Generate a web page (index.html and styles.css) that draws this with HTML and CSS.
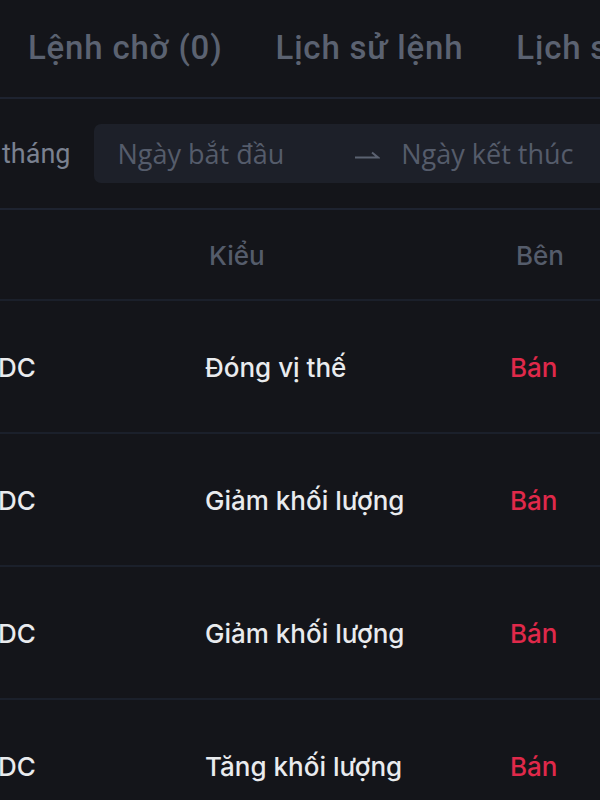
FILE: index.html
```html
<!DOCTYPE html>
<html lang="vi">
<head>
<meta charset="utf-8">
<link rel="stylesheet" href="styles.css">
</head>
<body>
<div class="page">
  <nav class="tabs">
    <span class="tab">Lệnh chờ (0)</span>
    <span class="tab">Lịch sử lệnh</span>
    <span class="tab">Lịch sử giao dịch</span>
  </nav>
  <div class="filters">
    <span class="period">tháng</span>
    <div class="range">
      <span class="ph">Ngày bắt đầu</span>
      <span class="arrow"><svg width="26" height="10" viewBox="0 0 26 10"><path d="M1 8.5H24L18 3.5" fill="none" stroke="#5b6271" stroke-width="2"/></svg></span>
      <span class="ph">Ngày kết thúc</span>
    </div>
  </div>
  <div class="table">
    <div class="row head">
      <span class="c1"></span>
      <span class="c2">Kiểu</span>
      <span class="c3">Bên</span>
    </div>
    <div class="row">
      <span class="c1">USDC</span>
      <span class="c2">Đóng vị thế</span>
      <span class="c3 sell">Bán</span>
    </div>
    <div class="row">
      <span class="c1">USDC</span>
      <span class="c2">Giảm khối lượng</span>
      <span class="c3 sell">Bán</span>
    </div>
    <div class="row">
      <span class="c1">USDC</span>
      <span class="c2">Giảm khối lượng</span>
      <span class="c3 sell">Bán</span>
    </div>
    <div class="row">
      <span class="c1">USDC</span>
      <span class="c2">Tăng khối lượng</span>
      <span class="c3 sell">Bán</span>
    </div>
  </div>
</div>
</body>
</html>
```

FILE: styles.css
```css
html, body {
  margin: 0;
  padding: 0;
  background: #14151a;
}
body {
  width: 600px;
  height: 800px;
  overflow: hidden;
  font-family: Inter, "Noto Sans", "Liberation Sans", sans-serif;
}
.page {
  width: 600px;
  overflow: hidden;
}
.tabs {
  height: 99px;
  box-sizing: border-box;
  display: flex;
  align-items: center;
  gap: 53px;
  padding-left: 28px;
  padding-bottom: 2px;
  border-bottom: 2px solid #1e2330;
  white-space: nowrap;
}
.tab {
  font-family: Roboto, "Noto Sans", sans-serif;
  font-weight: 500;
  font-size: 33px;
  color: #5b6271;
  letter-spacing: 0.8px;
}
.filters {
  height: 111px;
  box-sizing: border-box;
  display: flex;
  align-items: center;
  gap: 24px;
  border-bottom: 2px solid #1e2330;
  white-space: nowrap;
}
.period {
  font-family: Roboto, "Noto Sans", sans-serif;
  font-size: 27px;
  color: #7a8190;
  padding-left: 2px;
}
.range {
  flex: none;
  width: 560px;
  height: 59px;
  background: #1d2029;
  border-radius: 7px;
  display: flex;
  align-items: center;
  padding-left: 23px;
  box-sizing: border-box;
}
.ph {
  font-family: "Open Sans", "Noto Sans", sans-serif;
  font-size: 27px;
  color: #555c6b;
}
.arrow {
  display: flex;
  margin: 0 21px 0 70px;
}
.table {
  display: flex;
  flex-direction: column;
}
.row {
  display: grid;
  grid-template-columns: 205px 305px 1fr;
  align-items: center;
  height: 133px;
  box-sizing: border-box;
  padding-top: 2px;
  border-bottom: 2px solid #1b202b;
  font-size: 26px;
  color: #e9ebee;
  font-weight: 500;
  white-space: nowrap;
}
.row.head {
  height: 91px;
  color: #555c6b;
  font-size: 26px;
}
.row.head .c2 { padding-left: 4px; }
.row.head .c3 { padding-left: 6px; }
.c1 {
  margin-left: -38px;
}
.sell {
  color: #e0294a;
}
```
